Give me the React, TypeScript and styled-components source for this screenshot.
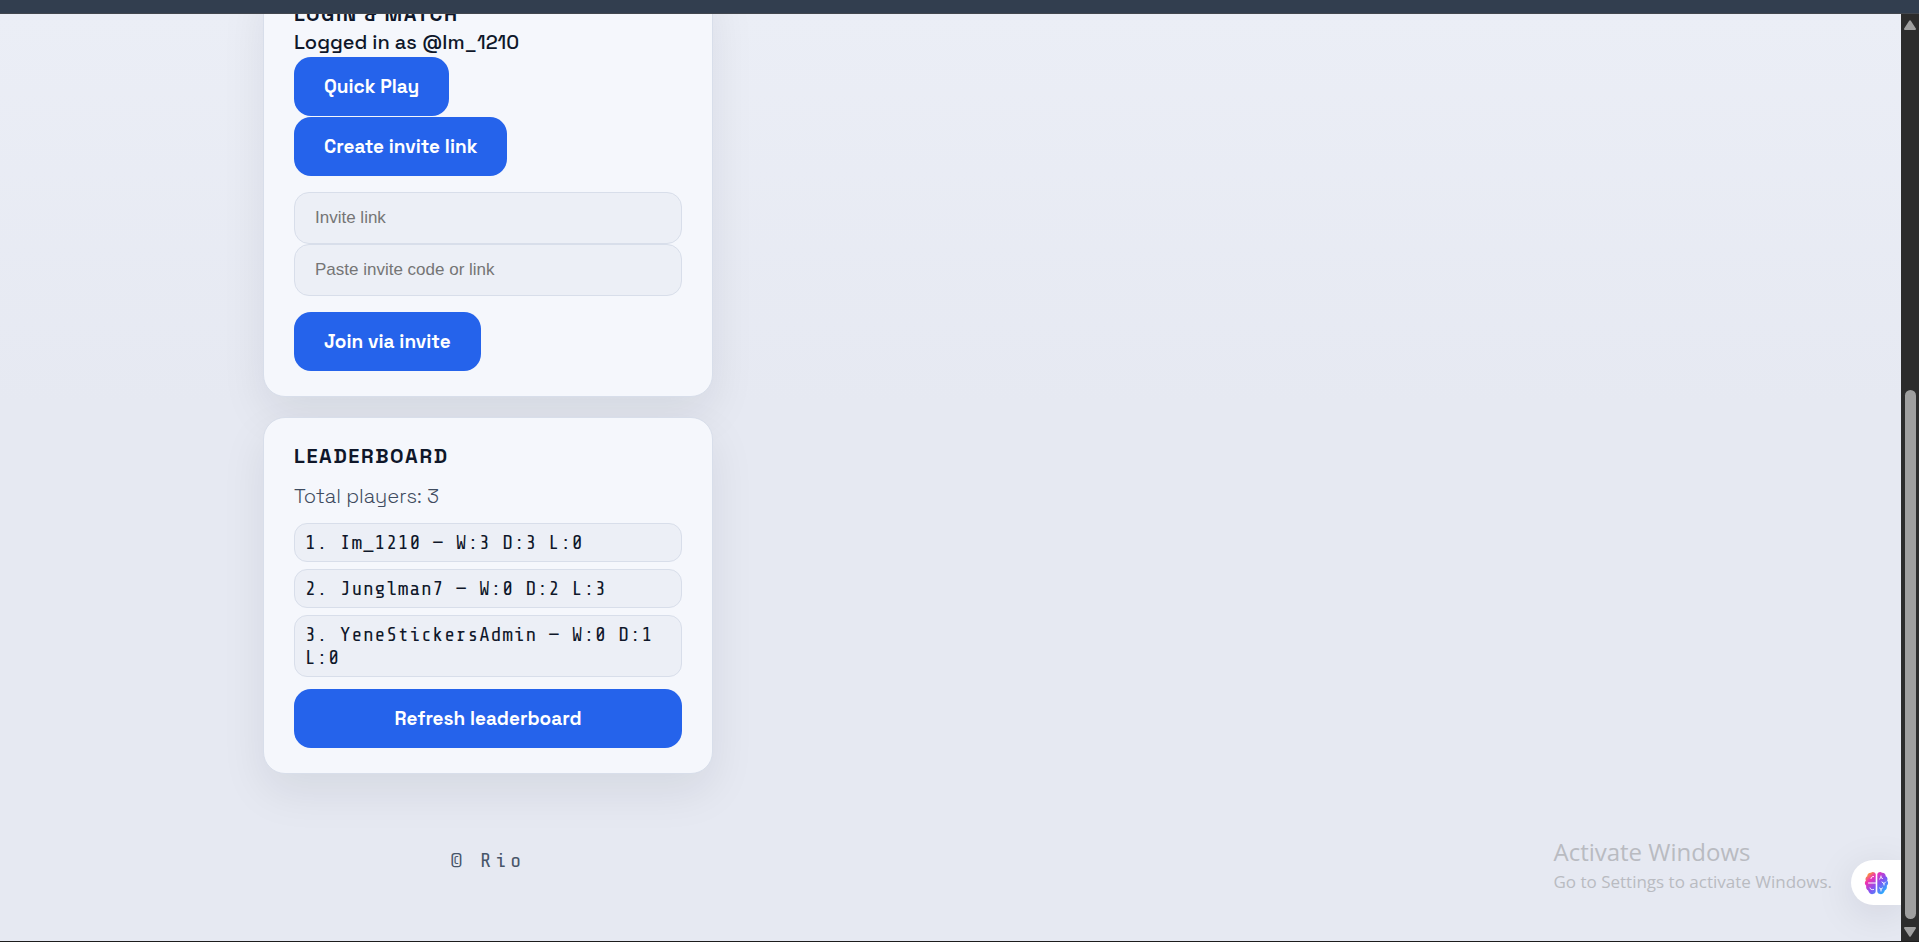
import React from 'react';
import styled, { createGlobalStyle, css } from 'styled-components';

const display = css`
  font-family: 'Space Grotesk', 'Inter', sans-serif;
`;
const mono = css`
  font-family: 'Share Tech Mono', 'Liberation Mono', monospace;
`;

const GlobalStyle = createGlobalStyle`
  *, *::before, *::after { box-sizing: border-box; }
  html, body, #root { height: 100%; }
  body { margin: 0; background: #1c1c1c; overflow: hidden; }
`;

const Window = styled.div`
  ${display}
  display: flex;
  flex-direction: column;
  height: 100%;
  padding-bottom: 1px;
  color: #0f172a;
`;

const TopBar = styled.div`
  flex: none;
  height: 14px;
  background: #323e4f;
  border-bottom: 1px solid #42474f;
`;

const Body = styled.div`
  flex: 1;
  min-height: 0;
  display: flex;
`;

const Viewport = styled.main`
  position: relative;
  flex: 1;
  min-width: 0;
  overflow: hidden;
  display: flex;
  flex-direction: column;
  justify-content: flex-end;
  background: linear-gradient(180deg, #ebeef6 0%, #e6e9f2 42%, #e6e9f2 100%);
`;

const Content = styled.div`
  width: 100%;
  max-width: 1375px;
  margin: 0 auto;
  display: grid;
  grid-template-columns: minmax(0, 450px) 1fr;
`;

const Column = styled.div`
  display: flex;
  flex-direction: column;
  gap: 20px;
`;

const Card = styled.section`
  display: flex;
  flex-direction: column;
  padding: 25px 30px;
  border: 1px solid #d8deea;
  border-radius: 22px;
  background: #f5f7fc;
  box-shadow: 0 18px 45px rgba(15, 23, 42, 0.08);
`;

const Title = styled.h2`
  margin: 0;
  font-size: 20px;
  font-weight: 600;
  line-height: 26px;
  letter-spacing: 0.08em;
  text-transform: uppercase;
`;

const Status = styled.p`
  margin: 0;
  font-size: 20px;
  font-weight: 500;
  line-height: 30px;
`;

const Muted = styled.p`
  margin: 12px 0;
  font-size: 20px;
  font-weight: 300;
  line-height: 30px;
  color: #3f4c60;
`;

const Stack = styled.div<{ $gap?: number; $top?: number }>`
  display: flex;
  flex-direction: column;
  align-items: flex-start;
  gap: ${({ $gap = 0 }) => $gap}px;
  margin-top: ${({ $top = 0 }) => $top}px;
`;

const Button = styled.button<{ $block?: boolean }>`
  ${display}
  width: ${({ $block }) => ($block ? '100%' : 'auto')};
  height: 59px;
  padding: 0 30px;
  border: 0;
  border-radius: 17px;
  background: #2563eb;
  color: #fff;
  font-size: 19px;
  font-weight: 600;
  cursor: pointer;
`;

const Field = styled.input`
  width: 100%;
  height: 52px;
  padding: 0 20px;
  border: 1px solid #d8deea;
  border-radius: 15px;
  background: #eceff6;
  font-family: 'Liberation Sans', Arial, sans-serif;
  font-size: 17px;
  color: #0f172a;

  &::placeholder {
    color: #757575;
    opacity: 1;
  }
`;

const Ranking = styled.ol`
  ${mono}
  display: flex;
  flex-direction: column;
  gap: 7px;
  margin: 0 0 12px;
  padding: 0;
  list-style: none;
  font-size: 20px;
  line-height: 23px;
  letter-spacing: 0.04em;
`;

const Rank = styled.li`
  padding: 7px 10px;
  border: 1px solid #d8deea;
  border-radius: 13px;
  background: #eceff6;
`;

const Footer = styled.footer`
  ${mono}
  padding: 55px 0 68px;
  text-align: center;
  font-size: 20px;
  line-height: 24px;
  letter-spacing: 4px;
  color: #475569;
`;

const Watermark = styled.aside`
  position: absolute;
  right: 69px;
  bottom: 47px;
  font-family: 'Segoe UI', 'Open Sans', sans-serif;
  color: #b9bbc1;
  pointer-events: none;
`;

const WatermarkTitle = styled.div`
  font-size: 24px;
  line-height: 36px;
`;

const WatermarkNote = styled.div`
  font-size: 17px;
  line-height: 24px;
`;

const Assistant = styled.button`
  position: absolute;
  right: 0;
  bottom: 36px;
  width: 50px;
  height: 45px;
  padding: 0 0 0 13px;
  display: flex;
  align-items: center;
  border: 0;
  border-radius: 23px 0 0 23px;
  background: #fff;
  box-shadow: 0 8px 40px rgba(15, 23, 42, 0.1);
  cursor: pointer;
`;

const Scrollbar = styled.div`
  flex: none;
  width: 18px;
  display: flex;
  flex-direction: column;
  align-items: center;
  padding: 6px 0 4px;
  background: #2c2c2c;
`;

const Track = styled.div`
  flex: 1;
  width: 11px;
  display: flex;
  flex-direction: column;
  justify-content: flex-end;
  padding: 8px 0;
`;

const Thumb = styled.div`
  height: 60%;
  border-radius: 6px;
  background: #9f9f9f;
`;

const Arrow = ({ down }: { down?: boolean }) => (
  <svg width="14" height="10" viewBox="0 0 14 10" aria-hidden="true">
    <path
      d={down ? 'M2 1h10L7 8.600Z' : 'M2 9h10L7 1.400Z'}
      fill="#9f9f9f"
      stroke="#9f9f9f"
      strokeWidth="2"
      strokeLinejoin="round"
    />
  </svg>
);

const BrainIcon = () => (
  <svg width="25" height="24" viewBox="0 0 25 24" aria-hidden="true">
    <defs>
      <linearGradient id="brain" gradientUnits="userSpaceOnUse" x1="3" y1="2" x2="21" y2="22">
        <stop offset="0" stopColor="#fbb01c" />
        <stop offset="0.26" stopColor="#ee2fb4" />
        <stop offset="0.58" stopColor="#8352f2" />
        <stop offset="1" stopColor="#22b8ff" />
      </linearGradient>
    </defs>
    <path
      d="M11.700 3C11 1 8.500.4 7 1.700 4.800 1.600 3 3.400 3.300 5.300 1.500 6.200 1 8.200 1.900 9.600.4 11 .5 13.600 2.200 14.800c-.5 2.200.5 4 2 4.700.6 2.400 2.600 3.900 4.700 3.600 1.500-.2 2.800-1.300 2.800-2.800ZM13.300 3C14 1 16.500.4 18 1.700c2.200-.1 4 1.700 3.700 3.600 1.800.9 2.300 2.900 1.400 4.300 1.500 1.400 1.400 4-.3 5.200.5 2.200-.5 4-2 4.700-.6 2.400-2.600 3.900-4.700 3.600-1.500-.2-2.800-1.300-2.800-2.800Z"
      fill="url(#brain)"
    />
    <path
      d="M4.500 12H12M7 7.500C7.200 5.900 8.300 5.500 9.500 5.500M6 17c.4 1.500 1.700 2 3.500 1.500M15.500 8l1.500-1.500V5M17 6.500l1.500 1M18 11l2 1.500 1.500-1.500M20 12.500V14M15.500 17l1.500 1.200 1.500-1.200M17 18.200V20"
      fill="none"
      stroke="#fff"
      strokeWidth="1"
      strokeLinecap="round"
    />
  </svg>
);

const players = [
  { name: 'Im_1210', w: 3, d: 3, l: 0 },
  { name: 'Junglman7', w: 0, d: 2, l: 3 },
  { name: 'YeneStickersAdmin', w: 0, d: 1, l: 0 },
];

export default function App() {
  return (
    <Window>
      <GlobalStyle />
      <TopBar />
      <Body>
        <Viewport>
          <Content>
            <Column>
              <Card>
                <Title>Login &amp; Match</Title>
                <Status>Logged in as @Im_1210</Status>
                <Stack $gap={1}>
                  <Button>Quick Play</Button>
                  <Button>Create invite link</Button>
                </Stack>
                <Stack $top={16}>
                  <Field aria-label="Invite link" placeholder="Invite link" readOnly />
                  <Field aria-label="Invite code" placeholder="Paste invite code or link" />
                </Stack>
                <Stack $top={16}>
                  <Button>Join via invite</Button>
                </Stack>
              </Card>
              <Card>
                <Title>Leaderboard</Title>
                <Muted>Total players: {players.length}</Muted>
                <Ranking>
                  {players.map((p, i) => (
                    <Rank key={p.name}>
                      {`${i + 1}. ${p.name} — W:${p.w} D:${p.d} L:${p.l}`}
                    </Rank>
                  ))}
                </Ranking>
                <Button $block>Refresh leaderboard</Button>
              </Card>
              <Footer>© Rio</Footer>
            </Column>
          </Content>
          <Watermark>
            <WatermarkTitle>Activate Windows</WatermarkTitle>
            <WatermarkNote>Go to Settings to activate Windows.</WatermarkNote>
          </Watermark>
          <Assistant aria-label="Open assistant">
            <BrainIcon />
          </Assistant>
        </Viewport>
        <Scrollbar aria-hidden="true">
          <Arrow />
          <Track>
            <Thumb />
          </Track>
          <Arrow down />
        </Scrollbar>
      </Body>
    </Window>
  );
}
